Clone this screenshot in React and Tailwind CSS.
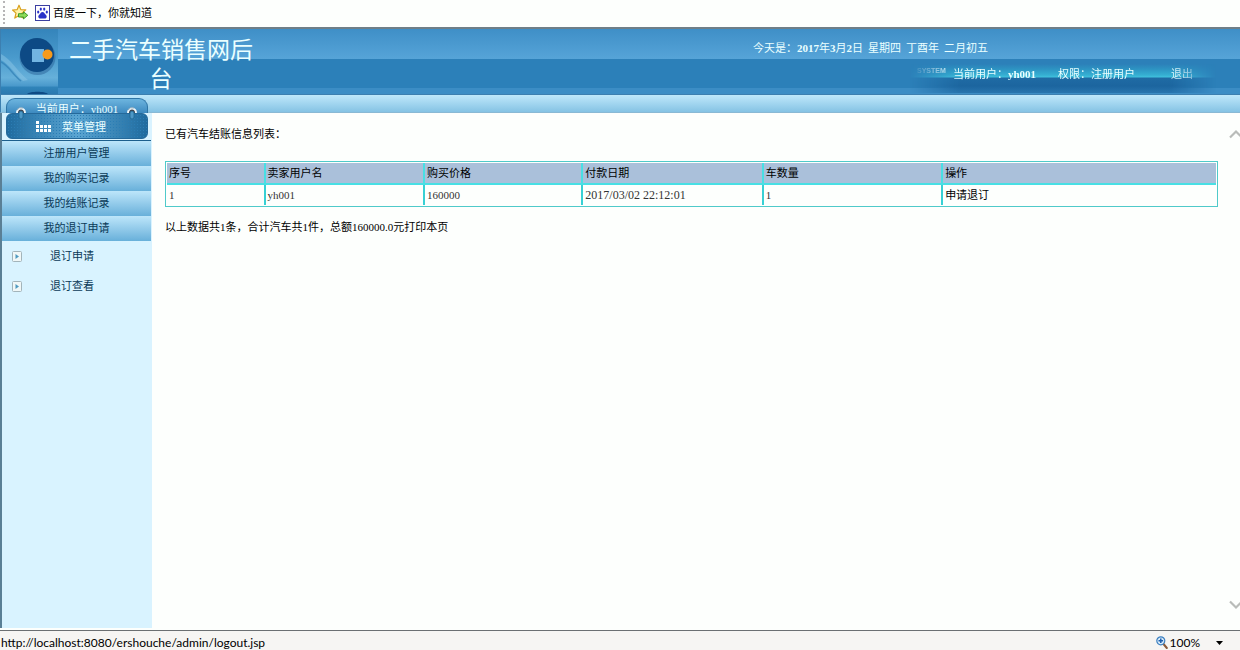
const menu = ['注册用户管理', '我的购买记录', '我的结账记录', '我的退订申请'];
const subMenu = ['退订申请', '退订查看'];

const columns = [
  { title: '序号', width: 'w-[9.2%]' },
  { title: '卖家用户名', width: 'w-[15.2%]' },
  { title: '购买价格', width: 'w-[15.1%]' },
  { title: '付款日期', width: 'w-[17.2%]' },
  { title: '车数量', width: 'w-[17.1%]' },
  { title: '操作', width: 'w-auto' },
];

const rows = [
  { id: 1, seller: 'yh001', price: '160000', paidAt: '2017/03/02 22:12:01', count: 1 },
];

function StarIcon() {
  return (
    <svg width="17" height="17" viewBox="0 0 17 17" aria-hidden="true">
      <path d="M7 1.2l1.8 4.4 5 .3-3.8 3.2 1.3 5L7 11.4l-4.2 2.7 1.2-5L.6 6l4.6-.4z" fill="#fff3a8" stroke="#d9a11c" strokeWidth="1.2" strokeLinejoin="round" />
      <path d="M6.5 9.7h5V7.8l4.3 3.5-4.3 3.6V13h-5z" fill="#8ddc5a" stroke="#3f9a2c" strokeWidth="1" strokeLinejoin="round" />
    </svg>
  );
}

function PawIcon() {
  return (
    <svg width="15" height="16" viewBox="0 0 15 16" aria-hidden="true">
      <rect x=".5" y=".5" width="14" height="15" fill="#fff" stroke="#3a3fa0" />
      <g fill="#2932c8">
        <ellipse cx="3.2" cy="7" rx="1.1" ry="1.6" />
        <ellipse cx="5.8" cy="4.1" rx="1.1" ry="1.7" />
        <ellipse cx="9.2" cy="4.1" rx="1.1" ry="1.7" />
        <ellipse cx="11.8" cy="7" rx="1.1" ry="1.6" />
        <path d="M7.5 7c1.5 0 2 1.5 3 2.4 1.2 1 1.5 1.8 1 3-.5 1.1-1.8 1.2-4 1.1-2.2.1-3.5 0-4-1.1-.5-1.2-.2-2 1-3 1-.9 1.500-2.400 3-2.400z" />
      </g>
    </svg>
  );
}

function Logo() {
  return (
    <svg className="shrink-0" width="57" height="65" viewBox="0 0 57 65" aria-hidden="true">
      <defs>
        <linearGradient id="logoBg" x1="0" y1="0" x2="0" y2="1">
          <stop offset="0" stopColor="#3484bb" />
          <stop offset=".45" stopColor="#4a9bcd" />
          <stop offset=".75" stopColor="#66b0da" />
          <stop offset=".87" stopColor="#4b9acc" />
          <stop offset=".9" stopColor="#2f83b9" />
          <stop offset="1" stopColor="#2a79b0" />
        </linearGradient>
      </defs>
      <rect width="57" height="65" fill="url(#logoBg)" />
      <path d="M0 25c10 5 16 17 27 26l-5 1C14 45 9 36 0 31z" fill="#8cc6e6" opacity=".5" />
      <path d="M0 33c8 4 12 13 20 19" stroke="#2f7db3" strokeWidth="1.5" fill="none" opacity=".7" />
      <circle cx="36.5" cy="28" r="18" fill="#2a6298" opacity=".5" />
      <circle cx="36" cy="26" r="17" fill="#0d4a85" />
      <rect x="31" y="20" width="12" height="13" fill="#72b4e2" />
      <circle cx="46.5" cy="25.5" r="5" fill="#f79a1c" />
      <path d="M26 65c3-3 18-3 21 0z" fill="#0d4a85" />
    </svg>
  );
}

function Binder() {
  return (
    <svg className="absolute left-2 top-2" width="126" height="18" viewBox="0 0 126 18" aria-hidden="true">
      {[7, 118].map((x) => (
        <g key={x}>
          <path d={`M${x - 5} 10a5 5.500 0 0 1 10 0z`} fill="#eef6fa" />
          <path d={`M${x - 3} 10a3 3.500 0 0 1 6 0z`} fill="#3d3f48" />
          <path d={`M${x - 4} 7a5 5 0 0 1 6-2`} stroke="#8fa9b8" strokeWidth="1" fill="none" />
          <rect x={x - 2} y="8" width="4" height="8" rx="2" fill="#4c97c6" stroke="#1f648f" strokeWidth=".8" />
        </g>
      ))}
    </svg>
  );
}

function GridIcon() {
  return (
    <svg width="15" height="12" viewBox="0 0 15 12" fill="#fff" aria-hidden="true">
      <rect x="0" y="0" width="3" height="3" />
      {[4, 8].map((y) => [0, 4, 8, 12].map((x) => <rect key={`${x}-${y}`} x={x} y={y} width="3" height="3" />))}
    </svg>
  );
}

function BulletIcon() {
  return (
    <svg width="10" height="11" viewBox="0 0 10 11" aria-hidden="true">
      <rect x=".5" y=".5" width="9" height="10" rx="1" fill="#f0f7f7" stroke="#a3b4ba" />
      <path d="M3.5 3v5L7 5.500z" fill="#4f9ac0" />
    </svg>
  );
}

function Chevron({ down }) {
  return (
    <svg width="14" height="10" viewBox="0 0 14 10" fill="none" stroke="#b9bcb9" strokeWidth="2.2" aria-hidden="true">
      <path d={down ? 'M1 1.5l6 6 6-6' : 'M1 8.5l6-6 6 6'} />
    </svg>
  );
}

function ZoomIcon() {
  return (
    <svg width="12" height="13" viewBox="0 0 12 13" aria-hidden="true">
      <path d="M7.5 8l3.3 4" stroke="#8a5a3a" strokeWidth="2" strokeLinecap="round" />
      <circle cx="4.8" cy="4.8" r="4" fill="#d8ecfa" stroke="#3b7fc0" strokeWidth="1.2" />
      <path d="M4.8 2.5v4.600M2.5 4.800h4.600" stroke="#1f5fae" strokeWidth="1.5" />
    </svg>
  );
}

export default function App() {
  return (
    <div className="flex min-h-screen flex-col bg-[#fdfffd] font-['Liberation_Serif','Noto_Sans_CJK_SC',sans-serif] text-[11px] leading-4 text-black">
      {/* Favourites bar */}
      <nav className="flex h-[29px] items-center border-b-2 border-[#6f7f88] pb-0.5 pl-[3px]">
        <span className="h-[23px] border-l-2 border-dotted border-[#b5b5b5]" />
        <a href="#favorites" aria-label="收藏" className="ml-[7px]"><StarIcon /></a>
        <a href="#baidu" className="ml-1.5 flex items-center gap-[3px]">
          <PawIcon />
          百度一下，你就知道
        </a>
      </nav>

      <header className="flex h-[66px] border-b border-l border-[#3c7fb0] bg-[linear-gradient(to_bottom,#3f8fc7_0px,#56a4d8_30px,#2c80b9_30px,#2c80b9_59px,#3c8dc5_59px)] text-[#eaffff]">
        <Logo />
        <h1 className="ml-[3px] w-[200px] pt-[7px] text-center text-[23px] leading-[29px]">二手汽车销售网后台</h1>
        <div className="ml-auto w-[487px]">
          <p className="flex gap-[5px] pt-[11px]">
            <span>今天是：<span className="font-bold">2017</span>年<span className="font-bold">3</span>月<span className="font-bold">2</span>日</span>
            <span>星期四</span>
            <span>丁酉年</span>
            <span>二月初五</span>
          </p>
          <div className="ml-[157px] mt-2 flex h-[29px] w-[316px] bg-[linear-gradient(to_bottom,#2c80b9_0px,#2d93c2_5px,#35afd2_11px,#3fc0dc_13px,#1f6ba4_14px,#1c659f_22px,#2875ae_29px)] pl-[7px] pt-0.5 [mask-image:linear-gradient(to_right,transparent,black_50px,black_260px,transparent_306px)]">
            <span className="w-9 text-[7px] font-bold leading-[9px] font-['Liberation_Sans',sans-serif]">SYSTEM</span>
            <span className="w-[105px]">当前用户：<span className="font-bold">yh001</span></span>
            <span className="w-[113px]">权限：注册用户</span>
            <a href="#logout">退出</a>
          </div>
        </div>
      </header>

      <div className="h-[18px] border-b border-l border-b-[#8ab9d4] border-l-[#3c7fb0] bg-linear-to-b from-[#bfe8fb] to-[#85c3e4] pl-[5px]">
        <div className="relative w-[142px] pt-[3px]">
          <div className="h-[15px] overflow-hidden rounded-t-[9px] border border-b-0 border-[#2e75a6] bg-linear-to-b from-[#6db5df] to-[#3d8ac0] text-center leading-[20px] text-[#eaffff]">当前用户：yh001</div>
          <Binder />
        </div>
      </div>

      <div className="flex flex-1">
        <aside className="w-[152px] shrink-0 border-l-2 border-[#5a7f95] bg-[#d9f3ff] pr-px">
          <div className="ml-1 flex h-[26px] w-[142px] items-center rounded-md border border-[#25699a] bg-[radial-gradient(#2b7db4_1px,transparent_1px),linear-gradient(to_right,#1f6b9f,#5aa5d2,#1f6b9f)] bg-size-[3px_3px,100%_100%] pl-[29px] pt-0.5 text-[#eaffff]">
            <GridIcon />
            <h2 className="ml-[11px]">菜单管理</h2>
          </div>
          <ul className="mt-px border-t border-[#1d5f8c]">
            {menu.map((item) => (
              <li key={item}>
                <a href="#menu" className="block h-[25px] bg-linear-to-b from-[#bde6fa] to-[#68b0da] text-center leading-6 text-[#0a3a58]">{item}</a>
              </li>
            ))}
          </ul>
          <ul>
            {subMenu.map((item) => (
              <li key={item}>
                <a href="#sub" className="flex h-[30px] items-center pl-2.5 text-[#0a3a58]">
                  <BulletIcon />
                  <span className="ml-7">{item}</span>
                </a>
              </li>
            ))}
          </ul>
        </aside>

        <main className="flex-1 pl-[13px] pt-[13px]">
          <p>已有汽车结账信息列表：</p>
          <div className="mt-[19px] border border-[#4fcaca] p-px">
            <table className="w-full table-fixed border-separate border-spacing-0 text-left">
              <thead className="bg-[#aac0da]">
                <tr>
                  {columns.map((col) => (
                    <th key={col.title} className={`${col.width} h-[22px] border-b-2 border-l-2 border-[#48dfe4] pl-0.5 font-normal first:border-l-0`}>{col.title}</th>
                  ))}
                </tr>
              </thead>
              <tbody>
                {rows.map((row) => (
                  <tr key={row.id} className="text-[#333] [&>td]:border-[#38d0d4] [&>td+td]:border-l-2">
                    <td className="h-5 pl-0.5">{row.id}</td>
                    <td className="pl-0.5">{row.seller}</td>
                    <td className="pl-0.5">{row.price}</td>
                    <td className="pl-0.5 text-[12px]">{row.paidAt}</td>
                    <td className="pl-0.5">{row.count}</td>
                    <td className="pl-0.5 text-black"><a href="#refund">申请退订</a></td>
                  </tr>
                ))}
              </tbody>
            </table>
          </div>
          <p className="mt-3">以上数据共1条，合计汽车共1件，总额160000.0元<a href="#print">打印本页</a></p>
        </main>

        <div className="ml-[11px] flex w-[11px] flex-col justify-between overflow-hidden pb-[18px] pt-4">
          <button type="button" aria-label="向上滚动" className="w-3.5"><Chevron /></button>
          <button type="button" aria-label="向下滚动" className="w-3.5"><Chevron down /></button>
        </div>
      </div>

      {/* Status bar */}
      <footer className="mt-0.5 flex h-5 items-center border-t border-[#6b6f72] bg-[#f6f5f3] pl-px pt-1 text-[12px] leading-4 font-['Lato',sans-serif]">
        <span>http://localhost:8080/ershouche/admin/logout.jsp</span>
        <button type="button" className="ml-auto mr-[17px] flex items-center gap-0.5">
          <ZoomIcon />
          100%
          <svg className="ml-3.5" width="7" height="4" viewBox="0 0 7 4" aria-hidden="true"><path d="M0 0h7L3.500 4z" /></svg>
        </button>
      </footer>
    </div>
  );
}
